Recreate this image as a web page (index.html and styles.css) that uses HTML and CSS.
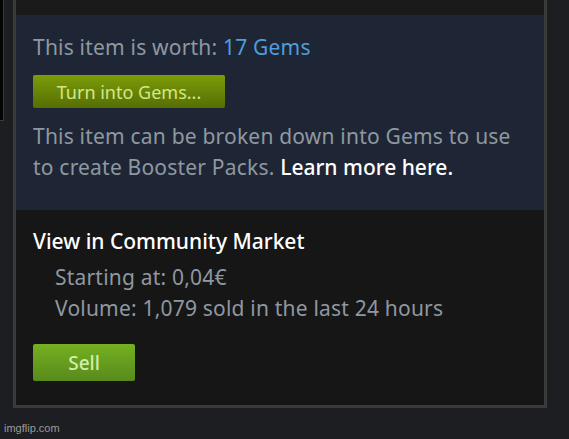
FILE: index.html
```html
<!DOCTYPE html>
<html lang="en">
<head>
    <meta charset="UTF-8">
    <title>Item actions</title>
    <link rel="stylesheet" href="styles.css">
</head>
<body>
    <div class="page">
        <!-- edge of the neighbouring panel -->
        <div class="side-stub"></div>

        <div class="item-panel">
            <div class="panel-top"></div>

            <!-- gems -->
            <div class="gems-section">
                <p class="worth">This item is worth: <span class="gem-count">17 Gems</span></p>
                <button class="btn-gems">Turn into Gems...</button>
                <p class="gems-info">This item can be broken down into Gems to use to create Booster Packs. <a class="learn-more" href="#">Learn more here.</a></p>
            </div>

            <!-- market -->
            <div class="market-section">
                <h2 class="market-title">View in Community Market</h2>
                <div class="market-stats">
                    <p>Starting at: 0,04€</p>
                    <p>Volume: 1,079 sold in the last 24 hours</p>
                </div>
                <button class="btn-sell">Sell</button>
            </div>
        </div>
    </div>

    <div class="watermark">imgflip.com</div>
</body>
</html>
```

FILE: styles.css
```css
body {
    margin: 0;
    background: #1d1e21;
    font-family: "Noto Sans", "DejaVu Sans", sans-serif;
    color: #8f98a0;
    height: 439px;
    overflow: hidden;
}
.page {
    display: flex;
    align-items: flex-start;
}
.side-stub {
    width: 3px;
    height: 120px;
    background: #050505;
    border-right: 1px solid #3a3a3a;
    border-bottom: 1px solid #3a3a3a;
}
.item-panel {
    margin-left: 9px;
    width: 528px;
    border: 3px solid #3a3a3b;
    border-top: none;
}
.panel-top {
    height: 15px;
    background: #1a1a1b;
}
.gems-section {
    background: #1e2636;
    padding: 17px 17px 27px;
}
.worth, .gems-info {
    margin: 0;
    font-size: 21px;
    letter-spacing: 0.2px;
    line-height: 31px;
}
.gems-info {
    width: 490px;
}
.gem-count {
    color: #4f9ddb;
}
.btn-gems {
    display: block;
    margin: 12px 0 13px;
    width: 192px;
    height: 33px;
    padding: 0;
    border: none;
    border-radius: 2px;
    background: linear-gradient(to bottom, #7c9c08, #566e05);
    color: #d2e885;
    font-family: inherit;
    font-size: 18px;
    cursor: pointer;
}
.learn-more {
    color: #ffffff;
    font-weight: 500;
    letter-spacing: 0;
    text-decoration: none;
}
.market-section {
    background: #161617;
    padding: 16px 17px 24px;
}
.market-title {
    margin: 0;
    font-size: 21px;
    font-weight: 500;
    line-height: 31px;
    color: #ffffff;
}
.market-stats {
    margin-top: 5px;
    padding-left: 22px;
}
.market-stats p {
    margin: 0;
    font-size: 21px;
    letter-spacing: 0.2px;
    line-height: 31px;
}
.btn-sell {
    display: block;
    margin-top: 20px;
    width: 102px;
    height: 37px;
    padding: 0;
    border: none;
    border-radius: 2px;
    background: linear-gradient(to bottom, #75b022, #588a1b);
    color: #d2efa9;
    font-family: inherit;
    font-size: 19px;
    font-weight: 500;
    cursor: pointer;
}
.watermark {
    margin: 14px 0 0 4px;
    font-family: "Liberation Sans", sans-serif;
    font-size: 11px;
    color: #9a9a9a;
}
```
